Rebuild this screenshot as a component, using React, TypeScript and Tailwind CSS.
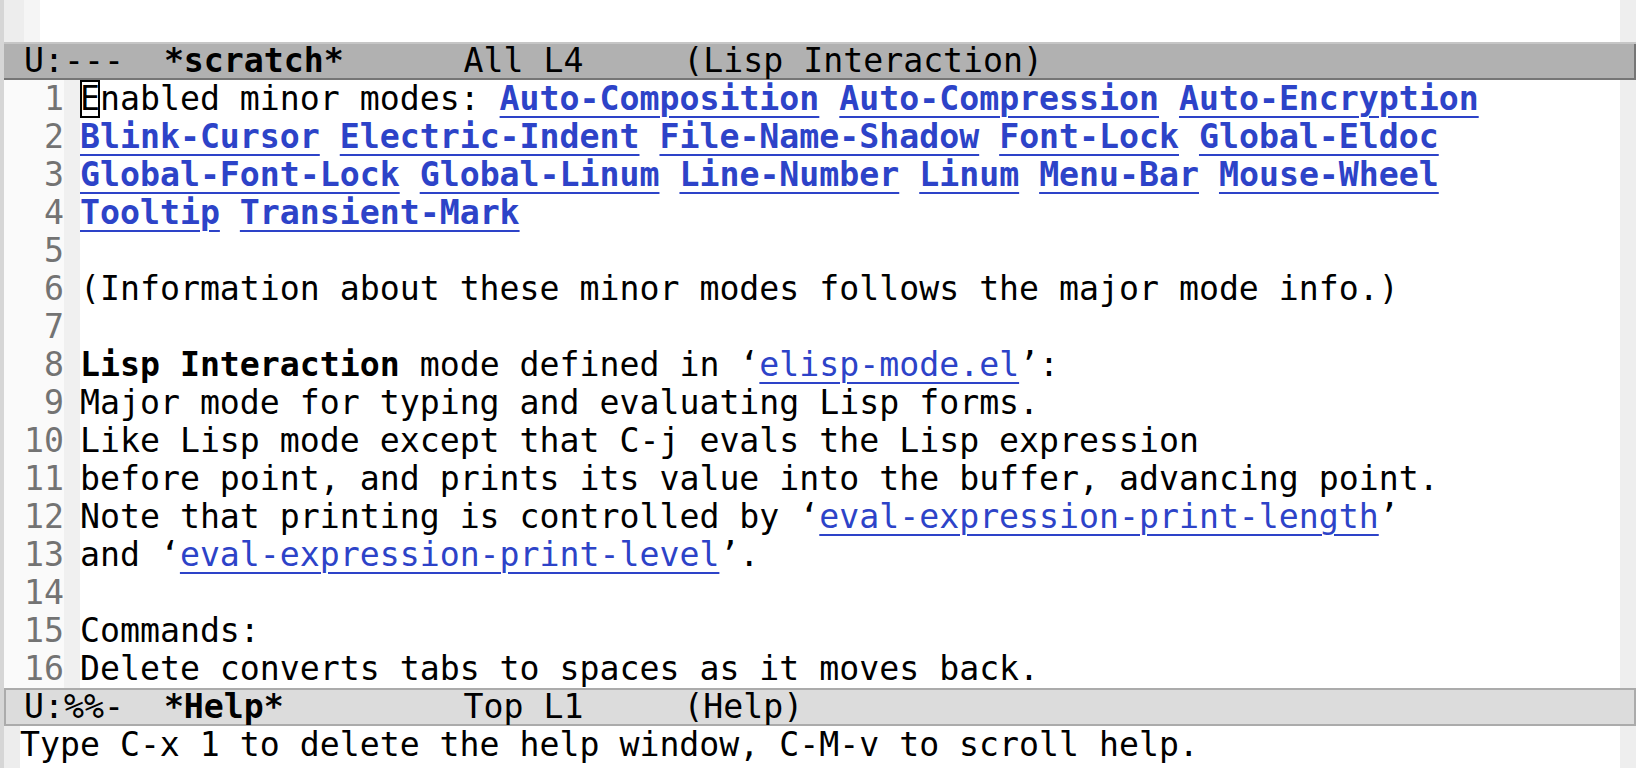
const mono = { fontFamily: '"DejaVu Sans Mono", "Liberation Mono", monospace' };

type Seg = { t: string; link?: boolean; bold?: boolean; cursor?: boolean };

const lines: Seg[][] = [
  [
    { t: "E", cursor: true },
    { t: "nabled minor modes: " },
    { t: "Auto-Composition", link: true, bold: true },
    { t: " " },
    { t: "Auto-Compression", link: true, bold: true },
    { t: " " },
    { t: "Auto-Encryption", link: true, bold: true },
  ],
  [
    { t: "Blink-Cursor", link: true, bold: true },
    { t: " " },
    { t: "Electric-Indent", link: true, bold: true },
    { t: " " },
    { t: "File-Name-Shadow", link: true, bold: true },
    { t: " " },
    { t: "Font-Lock", link: true, bold: true },
    { t: " " },
    { t: "Global-Eldoc", link: true, bold: true },
  ],
  [
    { t: "Global-Font-Lock", link: true, bold: true },
    { t: " " },
    { t: "Global-Linum", link: true, bold: true },
    { t: " " },
    { t: "Line-Number", link: true, bold: true },
    { t: " " },
    { t: "Linum", link: true, bold: true },
    { t: " " },
    { t: "Menu-Bar", link: true, bold: true },
    { t: " " },
    { t: "Mouse-Wheel", link: true, bold: true },
  ],
  [
    { t: "Tooltip", link: true, bold: true },
    { t: " " },
    { t: "Transient-Mark", link: true, bold: true },
  ],
  [],
  [{ t: "(Information about these minor modes follows the major mode info.)" }],
  [],
  [
    { t: "Lisp Interaction", bold: true },
    { t: " mode defined in \u2018" },
    { t: "elisp-mode.el", link: true },
    { t: "\u2019:" },
  ],
  [{ t: "Major mode for typing and evaluating Lisp forms." }],
  [{ t: "Like Lisp mode except that C-j evals the Lisp expression" }],
  [{ t: "before point, and prints its value into the buffer, advancing point." }],
  [
    { t: "Note that printing is controlled by \u2018" },
    { t: "eval-expression-print-length", link: true },
    { t: "\u2019" },
  ],
  [
    { t: "and \u2018" },
    { t: "eval-expression-print-level", link: true },
    { t: "\u2019." },
  ],
  [],
  [{ t: "Commands:" }],
  [{ t: "Delete converts tabs to spaces as it moves back." }],
];

function Segment({ s }: { s: Seg }) {
  if (s.cursor) {
    return (
      <span className="inline-block h-[38px] align-top shadow-[inset_0_0_0_2px_#000]">{s.t}</span>
    );
  }
  if (s.link) {
    return (
      <span
        className={
          "text-[#2d43c8] underline decoration-2 underline-offset-[6px] " + (s.bold ? "font-bold" : "")
        }
      >
        {s.t}
      </span>
    );
  }
  return <span className={s.bold ? "font-bold" : ""}>{s.t}</span>;
}

function ModeLine({ active, left, right }: { active: boolean; left: [string, string]; right: string }) {
  return (
    <div className="flex h-[38px]">
      <div className="w-[4px] bg-[#d6d6d6]" />
      <div
        className={
          active
            ? "flex-1 whitespace-pre pl-[20px] bg-[#b1b1b1] shadow-[inset_0_2px_0_#c6c6c6,inset_0_-2px_0_#767676,inset_-2px_0_0_#767676]"
            : "flex-1 whitespace-pre pl-[20px] bg-[#dcdcdc] shadow-[inset_0_0_0_2px_#ababab]"
        }
      >
        {left[0]}
        <span className="font-bold">{left[1]}</span>
        {right}
      </div>
    </div>
  );
}

export default function App() {
  return (
    <div
      style={mono}
      className="w-[1636px] h-[768px] overflow-hidden bg-white text-black text-[33.2px] leading-[38px] flex flex-col"
    >
      {/* bottom of the *scratch* window */}
      <div className="flex h-[42px]">
        <div className="w-[4px] bg-[#d6d6d6]" />
        <div className="w-[20px] bg-[#ededed]" />
        <div className="w-[16px] bg-[#f5f5f5]" />
        <div className="flex-1" />
        <div className="w-[16px] bg-[#eeeeee]" />
      </div>
      <ModeLine active left={["U:---  ", "*scratch*"]} right="      All L4     (Lisp Interaction)" />

      {/* *Help* window */}
      {lines.map((segs, i) => (
        <div key={i} className="flex h-[38px]">
          <div className="w-[4px] bg-[#d6d6d6]" />
          <div className="w-[60px] bg-[#fafafa] text-right text-[#737373] whitespace-pre">{i + 1}</div>
          <div className="w-[16px] bg-[#f0f0f0]" />
          <div className="flex-1 whitespace-pre">
            {segs.map((s, j) => (
              <Segment key={j} s={s} />
            ))}
          </div>
          <div className="w-[16px] bg-[#eeeeee]" />
        </div>
      ))}
      <ModeLine active={false} left={["U:%%-  ", "*Help*"]} right="         Top L1     (Help)" />

      {/* echo area */}
      <div className="flex h-[38px]">
        <div className="w-[4px] bg-[#d6d6d6]" />
        <div className="w-[16px] bg-[#ededed]" />
        <div className="flex-1 whitespace-pre">
          Type C-x 1 to delete the help window, C-M-v to scroll help.
        </div>
        <div className="w-[16px] bg-[#eeeeee]" />
      </div>
      <div className="flex flex-1">
        <div className="w-[4px] bg-[#d6d6d6]" />
        <div className="w-[16px] bg-[#ededed]" />
        <div className="flex-1" />
        <div className="w-[16px] bg-[#eeeeee]" />
      </div>
    </div>
  );
}
